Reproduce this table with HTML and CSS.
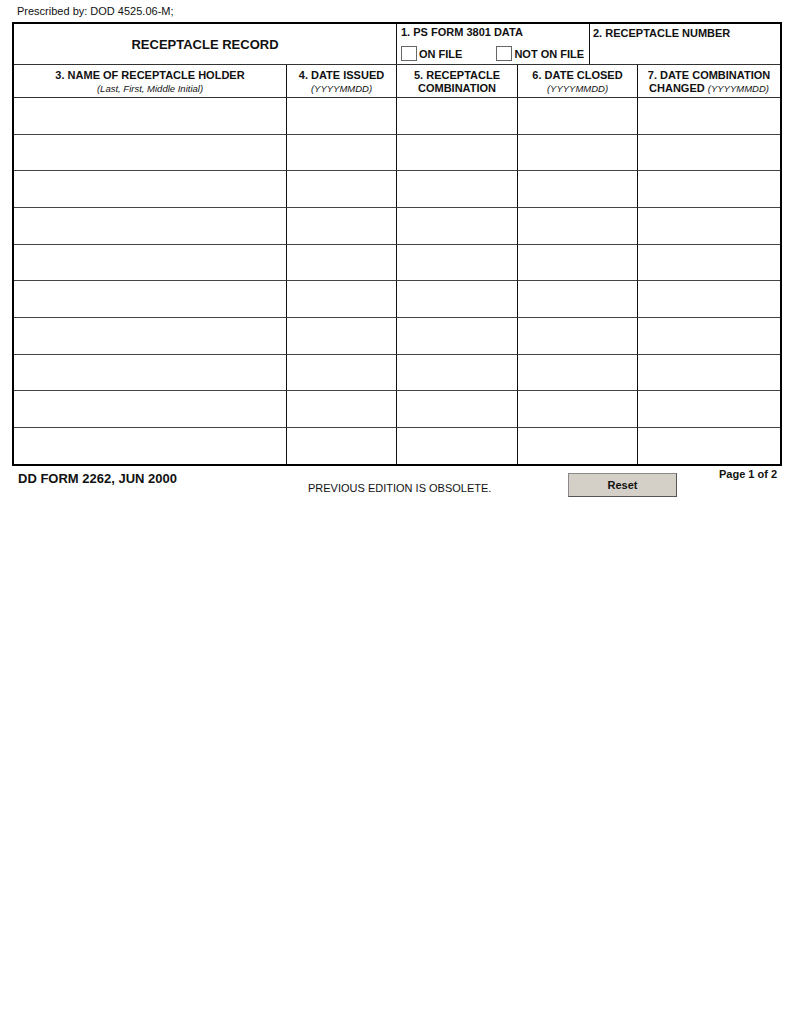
FILE: index.html
```html
<!DOCTYPE html>
<html>
<head>
<meta charset="utf-8">
<link rel="stylesheet" href="styles.css">
</head>
<body>
<div class="page">
  <div class="prescribed">Prescribed by: DOD 4525.06-M;</div>
  <div class="form">
    <div class="top">
      <div class="cell title">RECEPTACLE RECORD</div>
      <div class="cell ps">
        <div class="lbl">1. PS FORM 3801 DATA</div>
        <div class="checks">
          <label class="chk"><span class="box"></span>ON FILE</label>
          <label class="chk"><span class="box"></span>NOT ON FILE</label>
        </div>
      </div>
      <div class="cell num"><div class="lbl">2. RECEPTACLE NUMBER</div></div>
    </div>
    <div class="grid">
      <div class="hd">3. NAME OF RECEPTACLE HOLDER<br><i>(Last, First, Middle Initial)</i></div>
      <div class="hd">4. DATE ISSUED<br><i>(YYYYMMDD)</i></div>
      <div class="hd">5. RECEPTACLE<br>COMBINATION</div>
      <div class="hd">6. DATE CLOSED<br><i>(YYYYMMDD)</i></div>
      <div class="hd">7. DATE COMBINATION<br>CHANGED <i>(YYYYMMDD)</i></div>

      <div class="c"></div><div class="c"></div><div class="c"></div><div class="c"></div><div class="c"></div>
      <div class="c"></div><div class="c"></div><div class="c"></div><div class="c"></div><div class="c"></div>
      <div class="c"></div><div class="c"></div><div class="c"></div><div class="c"></div><div class="c"></div>
      <div class="c"></div><div class="c"></div><div class="c"></div><div class="c"></div><div class="c"></div>
      <div class="c"></div><div class="c"></div><div class="c"></div><div class="c"></div><div class="c"></div>
      <div class="c"></div><div class="c"></div><div class="c"></div><div class="c"></div><div class="c"></div>
      <div class="c"></div><div class="c"></div><div class="c"></div><div class="c"></div><div class="c"></div>
      <div class="c"></div><div class="c"></div><div class="c"></div><div class="c"></div><div class="c"></div>
      <div class="c"></div><div class="c"></div><div class="c"></div><div class="c"></div><div class="c"></div>
      <div class="c last"></div><div class="c last"></div><div class="c last"></div><div class="c last"></div><div class="c last"></div>
    </div>
  </div>
  <div class="footer">
    <div class="formno">DD FORM 2262, JUN 2000</div>
    <div class="prev">PREVIOUS EDITION IS OBSOLETE.</div>
    <button class="reset" type="button">Reset</button>
    <div class="pageno">Page 1 of 2</div>
  </div>
</div>
</body>
</html>
```

FILE: styles.css
```css
html, body {
  margin: 0;
  padding: 0;
  background: #fff;
}
body {
  font-family: "Liberation Sans", Arial, sans-serif;
  color: #111;
}
.page {
  width: 792px;
}
.prescribed {
  font-size: 11px;
  height: 22px;
  line-height: 22px;
  padding-left: 17px;
  box-sizing: border-box;
}
.form {
  margin-left: 12px;
  width: 770px;
  border: 2px solid #000;
  box-sizing: border-box;
}
.top {
  display: grid;
  grid-template-columns: 383px 193px 1fr;
  height: 41px;
  border-bottom: 1px solid #333;
  box-sizing: border-box;
}
.cell {
  border-right: 1px solid #111;
  box-sizing: border-box;
}
.cell.num {
  border-right: none;
}
.title {
  font-weight: bold;
  font-size: 13px;
  display: flex;
  align-items: center;
  justify-content: center;
  padding-top: 1px;
}
.lbl {
  font-weight: bold;
  font-size: 11px;
  line-height: 13px;
}
.ps .lbl {
  padding: 2px 0 0 4px;
}
.num .lbl {
  padding: 3px 0 0 3px;
}
.checks {
  display: flex;
  padding: 7px 0 0 4px;
}
.chk {
  display: flex;
  align-items: center;
  font-weight: bold;
  font-size: 11px;
}
.chk + .chk {
  margin-left: 34px;
}
.box {
  width: 16px;
  height: 15px;
  border: 1px solid #666;
  box-sizing: border-box;
  margin-right: 2px;
  background: #fff;
}
.grid {
  display: grid;
  grid-template-columns: 273px 110px 121px 120px 1fr;
}
.hd {
  height: 33px;
  box-sizing: border-box;
  border-right: 1px solid #111;
  border-bottom: 1px solid #333;
  text-align: center;
  font-weight: bold;
  font-size: 11px;
  line-height: 13px;
  padding-top: 4px;
}
.hd i {
  font-weight: normal;
  font-size: 9.5px;
}
.c {
  height: 36.67px;
  box-sizing: border-box;
  border-right: 1px solid #111;
  border-bottom: 1px solid #444;
}
.hd:nth-child(5n), .c:nth-child(5n) {
  border-right: none;
}
.c.last {
  border-bottom: none;
  height: 35.67px;
}
.footer {
  display: flex;
  align-items: flex-start;
  padding-left: 18px;
  height: 40px;
}
.formno {
  font-weight: bold;
  font-size: 13px;
  margin-top: 5px;
  width: 290px;
}
.prev {
  font-size: 11px;
  margin-top: 16px;
  width: 260px;
}
.reset {
  width: 109px;
  height: 24px;
  margin-top: 7px;
  background: #d4d0c8;
  border: 1px solid #8a8a8a;
  border-right-color: #555;
  border-bottom-color: #555;
  font-family: "Liberation Sans", Arial, sans-serif;
  font-weight: bold;
  font-size: 11px;
  color: #111;
  padding: 0;
}
.pageno {
  font-weight: bold;
  font-size: 11px;
  margin-top: 2px;
  margin-left: 42px;
}
```
